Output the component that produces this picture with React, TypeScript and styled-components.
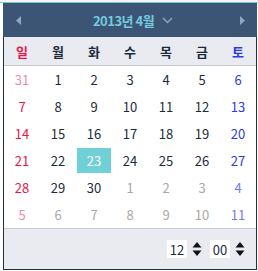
import React from "react";
import styled, { createGlobalStyle } from "styled-components";

const Global = createGlobalStyle`
  html, body { margin: 0; padding: 0; background: #ffffff; }
  body { font-family: "Noto Sans CJK KR", "Noto Sans", sans-serif; }
`;

const Page = styled.div`
  width: 258px;
  height: 271px;
  overflow: hidden;
  background: linear-gradient(to bottom, #f3f5f7 0, #f3f5f7 2px, #7cc7cf 2px, #7cc7cf 3px, #ffffff 3px);
  padding: 3px 1px 0 3px;
  box-sizing: border-box;
`;

const Popup = styled.div`
  width: 254px;
  display: flex;
  flex-direction: column;
  border: 1px solid #1e3144;
  border-top: none;
  background: #ffffff;
  box-sizing: border-box;
`;

const Header = styled.div`
  height: 34px;
  margin: 0 -1px;
  background: #3d5574;
  display: flex;
  align-items: center;
  padding: 0 10px 0 10px;
`;

const Title = styled.div`
  flex: 1;
  display: flex;
  align-items: center;
  justify-content: center;
  gap: 8px;
  color: #74cade;
  font-weight: 700;
  font-size: 13px;
  letter-spacing: -0.5px;
  padding-left: 6px;
`;

const ArrowBtn = styled.div`
  width: 10px;
  height: 14px;
  display: flex;
  align-items: center;
  justify-content: center;
`;

const WeekRow = styled.div`
  display: grid;
  grid-template-columns: repeat(7, 36px);
  height: 28px;
  background: #e9ebf0;
  border-bottom: 1px solid #c8ccd2;
  align-items: center;
`;

const WeekDay = styled.div<{ $c: string }>`
  text-align: center;
  font-size: 13px;
  font-weight: 700;
  color: ${(p) => p.$c};
`;

const Grid = styled.div`
  display: grid;
  grid-template-columns: repeat(7, 36px);
  grid-auto-rows: 27px;
`;

const Cell = styled.div<{ $c: string; $sel?: boolean }>`
  margin: 1px;
  display: flex;
  align-items: center;
  justify-content: center;
  font-size: 13px;
  color: ${(p) => (p.$sel ? "#ffffff" : p.$c)};
  background: ${(p) => (p.$sel ? "#6fd0d8" : "transparent")};
`;

const Footer = styled.div`
  height: 40px;
  background: #e9ebf0;
  border-top: 1px solid #c8ccd2;
  display: flex;
  align-items: center;
  justify-content: flex-end;
  padding: 0 11px 0 0;
  gap: 8px;
`;

const TimeGroup = styled.div`
  display: flex;
  align-items: center;
  gap: 5px;
`;

const TimeBox = styled.div`
  width: 20px;
  height: 18px;
  background: #ffffff;
  font-size: 13px;
  color: #1c2a3a;
  display: flex;
  align-items: center;
  justify-content: center;
`;

const Spin = () => (
  <svg width="10" height="16" viewBox="0 0 10 16">
    <path d="M5 1 L9.5 6.5 L0.5 6.5 Z" fill="#111" />
    <path d="M0.5 9.5 L9.5 9.5 L5 15 Z" fill="#111" />
  </svg>
);

const NAVY = "#1c2b3c";
const GREY = "#a8a8a8";
const RED = "#e8174a";
const RED_L = "#ec8ca4";
const BLUE = "#2b3ae8";
const BLUE_L = "#6f7ef0";

type D = { n: number; cur: boolean };
const days: D[] = [];
days.push({ n: 31, cur: false });
for (let i = 1; i <= 30; i++) days.push({ n: i, cur: true });
for (let i = 1; i <= 11; i++) days.push({ n: i, cur: false });

const colorFor = (idx: number, cur: boolean) => {
  const col = idx % 7;
  if (col === 0) return cur ? RED : RED_L;
  if (col === 6) return cur ? BLUE : BLUE_L;
  return cur ? NAVY : GREY;
};

const weekdays = ["일", "월", "화", "수", "목", "금", "토"];

export default function App() {
  return (
    <Page>
      <Global />
      <Popup>
        <Header>
          <ArrowBtn>
            <svg width="5" height="9" viewBox="0 0 5 9">
              <path d="M5 0 L0 4.5 L5 9 Z" fill="#8ea6c2" />
            </svg>
          </ArrowBtn>
          <Title>
            <span>2013년 4월</span>
            <svg width="11" height="7" viewBox="0 0 11 7">
              <path d="M1 1 L5.5 5.5 L10 1" stroke="#8ea3bd" strokeWidth="1.5" fill="none" />
            </svg>
          </Title>
          <ArrowBtn>
            <svg width="5" height="9" viewBox="0 0 5 9">
              <path d="M0 0 L5 4.5 L0 9 Z" fill="#8ea6c2" />
            </svg>
          </ArrowBtn>
        </Header>
        <WeekRow>
          {weekdays.map((w, i) => (
            <WeekDay key={w} $c={i === 0 ? RED : i === 6 ? BLUE : NAVY}>
              {w}
            </WeekDay>
          ))}
        </WeekRow>
        <Grid>
          {days.map((d, i) => (
            <Cell key={i} $c={colorFor(i, d.cur)} $sel={d.cur && d.n === 23}>
              {d.n}
            </Cell>
          ))}
        </Grid>
        <Footer>
          <TimeGroup>
            <TimeBox>12</TimeBox>
            <Spin />
          </TimeGroup>
          <TimeGroup>
            <TimeBox>00</TimeBox>
            <Spin />
          </TimeGroup>
        </Footer>
      </Popup>
    </Page>
  );
}
